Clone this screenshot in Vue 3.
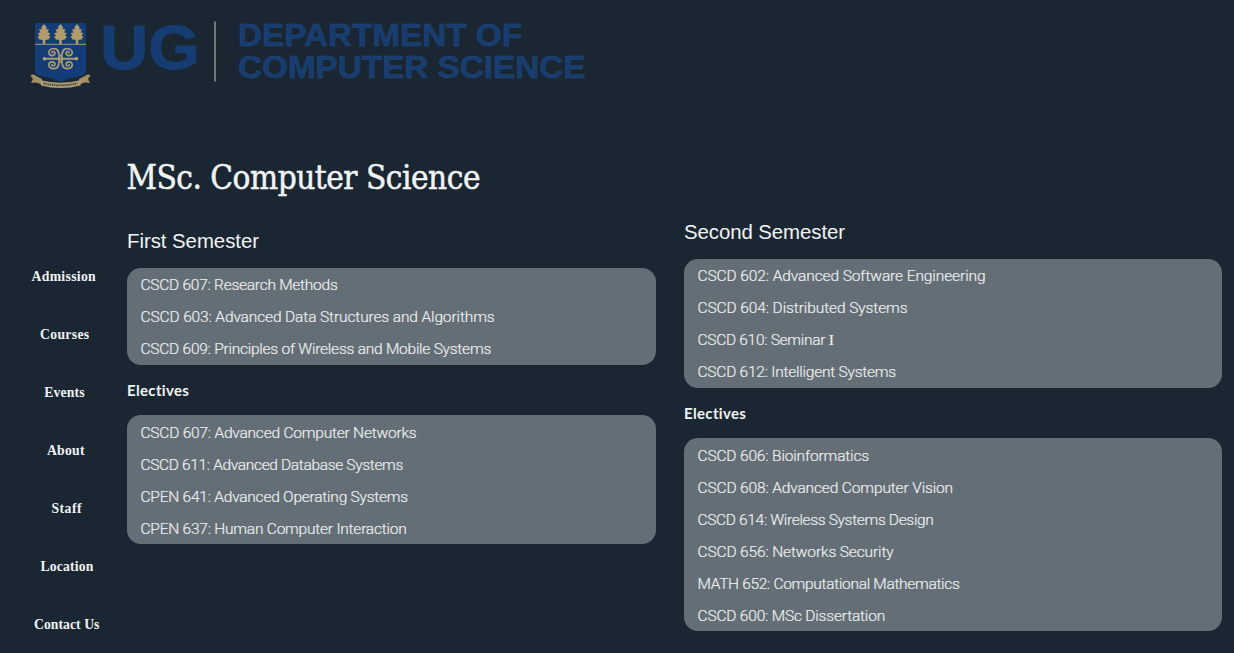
<script setup>
const nav = [
  { label: 'Admission', left: 31.5, width: 64.5 },
  { label: 'Courses', left: 40, width: 49.5 },
  { label: 'Events', left: 44.3, width: 40.5 },
  { label: 'About', left: 47, width: 37.7 },
  { label: 'Staff', left: 51.5, width: 30.5 },
  { label: 'Location', left: 40.5, width: 53 },
  { label: 'Contact Us', left: 34, width: 65.5 },
]

const semesters = [
  {
    name: 'First Semester',
    side: 'first',
    width: 132,
    core: [
      { text: 'CSCD 607: Research Methods', width: 197 },
      { text: 'CSCD 603: Advanced Data Structures and Algorithms', width: 354 },
      { text: 'CSCD 609: Principles of Wireless and Mobile Systems', width: 350.5 },
    ],
    electives: [
      { text: 'CSCD 607: Advanced Computer Networks', width: 276 },
      { text: 'CSCD 611: Advanced Database Systems', width: 262.5 },
      { text: 'CPEN 641: Advanced Operating Systems', width: 267.5 },
      { text: 'CPEN 637: Human Computer Interaction', width: 266 },
    ],
  },
  {
    name: 'Second Semester',
    side: 'second',
    width: 161,
    core: [
      { text: 'CSCD 602: Advanced Software Engineering', width: 288 },
      { text: 'CSCD 604: Distributed Systems', width: 210 },
      { text: 'CSCD 610: Seminar ', numeral: 'I', width: 136 },
      { text: 'CSCD 612: Intelligent Systems', width: 198.5 },
    ],
    electives: [
      { text: 'CSCD 606: Bioinformatics', width: 171.5 },
      { text: 'CSCD 608: Advanced Computer Vision', width: 255.5 },
      { text: 'CSCD 614: Wireless Systems Design', width: 236 },
      { text: 'CSCD 656: Networks Security', width: 196 },
      { text: 'MATH 652: Computational Mathematics', width: 262 },
      { text: 'CSCD 600: MSc Dissertation', width: 187.5 },
    ],
  },
]

// Tracks a line of text so that it fills the given width.
const vFit = {
  mounted(el, { value }) {
    const natural = el.getBoundingClientRect().width
    el.style.letterSpacing = `${(value - natural) / el.textContent.length}px`
  },
}
</script>

<template>
  <div class="page">
    <header class="header">
      <svg class="logo" width="600" height="110" viewBox="0 0 600 110">
        <path d="M35 23H86V71Q86 75 81 76Q67 78 60.500 82Q54 78 40 76Q35 75 35 71Z" fill="#133d78" />
        <path d="M35 44.300H86" stroke="#a8976a" stroke-width="1" />
        <g v-for="x in [44, 60.500, 77]" :key="x" :transform="`translate(${x} 24)`" fill="#b39c68">
          <path d="M0 0L2.800 3.500L2 5L5 5.500L3.500 8.500L6.300 9L4.500 12L6.500 12.500L4.500 15.500L1.300 16V20H-1.300V16L-4.500 15.500L-6.500 12.500L-4.500 12L-6.300 9L-3.500 8.500L-5 5.500L-2 5L-2.800 3.500Z" />
        </g>
        <g fill="none" stroke="#a99a70" stroke-width="1.700" stroke-linecap="round">
          <path d="M44 58.700H77" stroke-width="2" />
          <g v-for="t in ['1 1', '-1 1', '1 -1', '-1 -1']" :key="t" :transform="`translate(60.500 58.700) scale(${t})`">
            <path d="M1.200 0C1.200 6 2 10 6.500 10C10.500 10 12.500 7.500 11.500 4.800C10.500 2.500 6 2.500 5.500 5.300C5.500 7.500 8.500 7.700 8.700 6" />
          </g>
          <path d="M57.500 58.700L60.500 55.500L63.500 58.700L60.500 62Z" stroke-width="1.200" />
        </g>
        <circle cx="44.500" cy="58.700" r="1.800" fill="#b5a06c" />
        <circle cx="76.500" cy="58.700" r="1.800" fill="#b5a06c" />
        <path d="M30.500 75.500Q33 73.500 36 76L42 79L41 84L36 82.500L31 83L33 79Z M90.500 75.500Q88 73.500 85 76L79 79L80 84L85 82.500L90 83L88 79Z" fill="#a58e60" />
        <path d="M40 80Q60.500 85.500 81 80L80.500 85.500Q60.500 90.500 41 85.500Z" fill="#aa9d78" />
        <path d="M43.500 83.300Q60.500 87.300 77.500 83.300" fill="none" stroke="#51503f" stroke-width="2" stroke-dasharray="1.500 .6" />
        <path d="M215 21.500V81.500" stroke="#8c8d88" stroke-width="1.600" />
        <g class="brand">
          <text class="ug" x="100.300" y="68.500" font-size="63.500" textLength="99.500" lengthAdjust="spacingAndGlyphs">UG</text>
          <text x="238" y="45.700" font-size="31" textLength="284" lengthAdjust="spacingAndGlyphs">DEPARTMENT OF</text>
          <text x="238" y="78.300" font-size="31" textLength="347.500" lengthAdjust="spacingAndGlyphs">COMPUTER SCIENCE</text>
        </g>
      </svg>
    </header>

    <div class="body">
      <nav class="nav">
        <a v-for="n in nav" :key="n.label" :style="{ paddingLeft: n.left + 'px' }"><span v-fit="n.width">{{ n.label }}</span></a>
      </nav>

      <main class="main">
        <h1><span v-fit="353.5">MSc. Computer Science</span></h1>
        <div class="semesters">
          <section v-for="s in semesters" :key="s.name" :class="s.side">
            <h2><span v-fit="s.width">{{ s.name }}</span></h2>
            <ul>
              <li v-for="c in s.core" :key="c.text"><span v-fit="c.width">{{ c.text }}<i v-if="c.numeral">{{ c.numeral }}</i></span></li>
            </ul>
            <h3><span v-fit="62.5">Electives</span></h3>
            <ul>
              <li v-for="c in s.electives" :key="c.text"><span v-fit="c.width">{{ c.text }}</span></li>
            </ul>
          </section>
        </div>
      </main>
    </div>
  </div>
</template>

<style>
body {
  background: #1a2733;
}
</style>

<style scoped>
.page {
  height: 653px;
  overflow: hidden;
  background: #1a2733;
  color: #f1f2f2;
  font-family: 'Liberation Sans', sans-serif;
}
.header {
  height: 110px;
}
.logo {
  display: block;
}
.brand {
  font-family: 'Liberation Sans', sans-serif;
  font-weight: bold;
  fill: #153d74;
  stroke: #2b4a6e;
  stroke-width: 0.4;
}
.ug {
  stroke: #183e70;
  stroke-width: 1;
}
.body {
  display: flex;
}
span {
  display: inline-block;
  white-space: pre;
}
.nav {
  width: 127px;
  flex: none;
  display: flex;
  flex-direction: column;
  padding-top: 138px;
}
.nav a {
  height: 58px;
  font: bold 13.700px/58px 'Liberation Serif', serif;
}
.main {
  flex: 1;
}
h1 {
  margin: 46px 0 0 -0.500px;
  height: 44px;
  font: 400 33px/44px 'DejaVu Serif Condensed', 'DejaVu Serif', serif;
  font-stretch: condensed;
  -webkit-text-stroke: 0.5px #f1f2f2;
}
.semesters {
  display: grid;
  grid-template-columns: 529px 538px;
  column-gap: 28px;
  align-items: start;
}
.first {
  padding-top: 27px;
}
.second {
  padding-top: 18px;
}
h2 {
  margin: 0;
  height: 41px;
  font-size: 20.400px;
  font-weight: 400;
  line-height: 28px;
}
ul {
  margin: 0;
  padding: 0.200px 14px 0.200px 13.500px;
  list-style: none;
  border-radius: 14px;
  background: #646e76;
}
li {
  height: 32.100px;
  font: 300 15.500px/34.400px Roboto, sans-serif;
  color: #eceeef;
  -webkit-text-stroke: 0.200px #eceeef;
}
i {
  font-family: 'Liberation Serif', serif;
  font-style: normal;
  font-weight: 400;
  line-height: 1;
}
h3 {
  margin: 0;
  height: 50.700px;
  font: 700 15px/51px Lato, sans-serif;
}
</style>
